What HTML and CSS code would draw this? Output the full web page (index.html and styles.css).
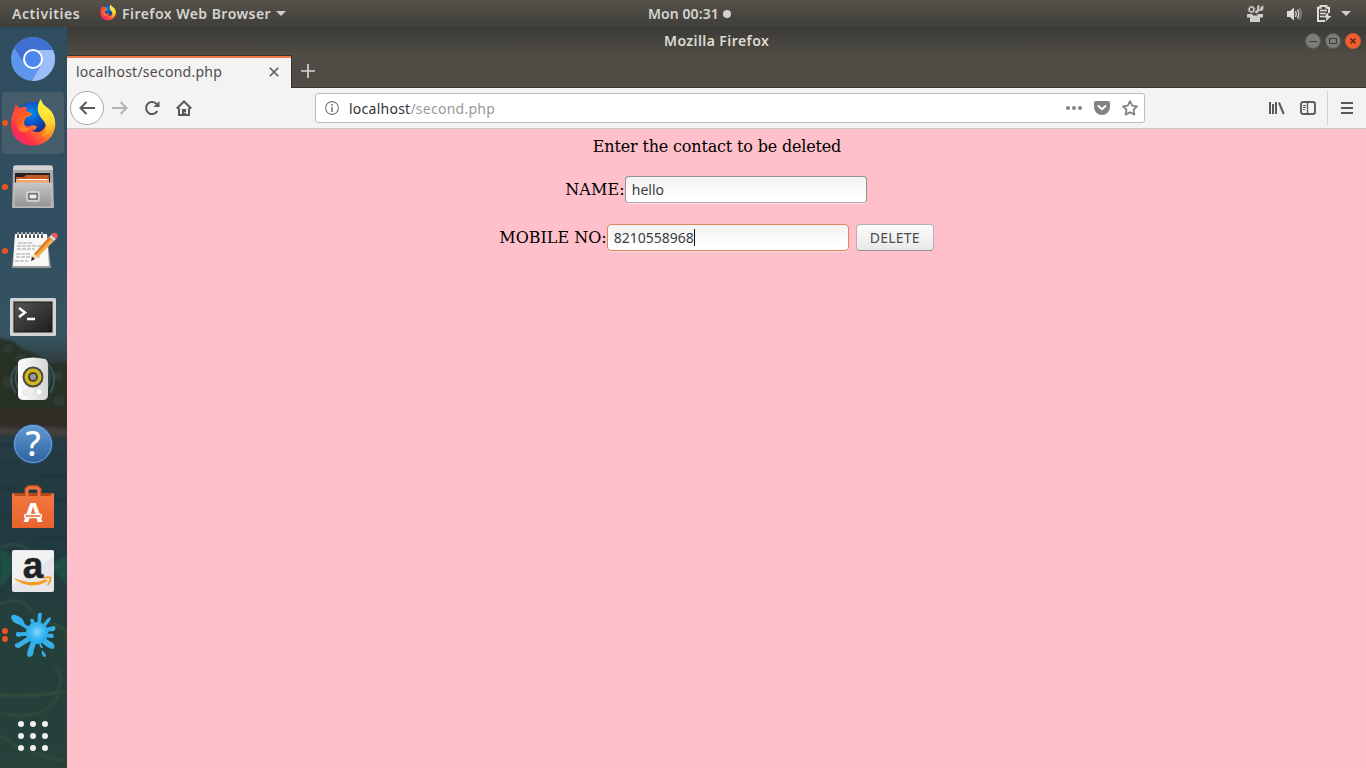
FILE: index.html
```html
<!DOCTYPE html>
<html lang="en">
<head>
<meta charset="utf-8">
<title>Mozilla Firefox</title>
<link rel="stylesheet" href="styles.css">
</head>
<body>
<svg class="defs" width="0" height="0" aria-hidden="true">
  <defs>
    <linearGradient id="ffbody" x1="0" y1="1" x2="1" y2="0"><stop offset="0" stop-color="#f0208a"/><stop offset=".28" stop-color="#ff3048"/><stop offset=".58" stop-color="#ff901c"/><stop offset="1" stop-color="#fff13c"/></linearGradient>
    <linearGradient id="fftail" x1="0" y1="0" x2="0" y2="1"><stop offset="0" stop-color="#fff54a"/><stop offset=".55" stop-color="#ffdc30"/><stop offset="1" stop-color="#ff9820"/></linearGradient>
    <linearGradient id="ffhead" x1="0" y1="0" x2="1" y2="1"><stop offset="0" stop-color="#ff3a45"/><stop offset=".45" stop-color="#ff5a26"/><stop offset="1" stop-color="#ff9c20"/></linearGradient>
    <radialGradient id="ffglobe" cx=".45" cy=".3" r=".6"><stop offset="0" stop-color="#0090ee"/><stop offset=".45" stop-color="#0a58cc"/><stop offset="1" stop-color="#1b2880"/></radialGradient>
    <linearGradient id="metal" x1="0" y1="0" x2="0" y2="1"><stop offset="0" stop-color="#c6c6c6"/><stop offset="1" stop-color="#949494"/></linearGradient>
    <linearGradient id="screen" x1="0" y1="0" x2="1" y2="1"><stop offset="0" stop-color="#555"/><stop offset="1" stop-color="#1c1c1c"/></linearGradient>
    <linearGradient id="speaker" x1="0" y1="0" x2="1" y2="0"><stop offset="0" stop-color="#fff"/><stop offset="1" stop-color="#d4d4d2"/></linearGradient>
    <linearGradient id="help" x1="0" y1="0" x2="0" y2="1"><stop offset="0" stop-color="#629bd4"/><stop offset="1" stop-color="#2c619f"/></linearGradient>
    <linearGradient id="bag" x1="0" y1="0" x2="0" y2="1"><stop offset="0" stop-color="#f27640"/><stop offset="1" stop-color="#e9642d"/></linearGradient>
    <radialGradient id="splat" cx=".5" cy=".45" r=".6"><stop offset="0" stop-color="#80d6fa"/><stop offset=".6" stop-color="#34b4f0"/><stop offset="1" stop-color="#22a6e8"/></radialGradient>
    <linearGradient id="wall" x1="0" y1="0" x2="0" y2="1"><stop offset="0" stop-color="#2f4d5f"/><stop offset=".25" stop-color="#304e60"/><stop offset=".42" stop-color="#36535f"/><stop offset=".45" stop-color="#323f40"/><stop offset=".5" stop-color="#2b3028"/><stop offset=".535" stop-color="#34342f"/><stop offset=".56" stop-color="#253b45"/><stop offset=".72" stop-color="#203a40"/><stop offset=".8" stop-color="#243f3b"/><stop offset="1" stop-color="#25413a"/></linearGradient>
    <filter id="soft" x="-10%" y="-10%" width="120%" height="120%"><feGaussianBlur stdDeviation="1.2"/></filter>
    <symbol id="firefox" viewBox="0 0 46 48">
      <circle cx="23" cy="21" r="18" fill="url(#ffglobe)"/>
      <path fill="url(#ffbody)" d="M1 25C1 19 2 15 4.500 12L5.500 6L10 9.500Q13 8 16 9L15 15L14 24Q15 28 19 27.500Q24 25 27 28Q26 31 22 31.500Q31 37 36 26C38 20 36 15 41 12C47 20 47 32 39 40C32 47 22 48 14 45C5 41 1 34 1 25Z"/>
      <path fill="url(#ffhead)" d="M3 15L5.500 6L9.500 9.500Q13 7 17 8L16 12L22 14.500Q21 17 17 18Q14 20 14 24Q13 29 19 29Q17 35 9 32Z"/>
      <path fill="url(#fftail)" d="M31 0C26 7 27 14 32 20C38 26 37 32 32 37C39 36 43 32 43 27L45 29C46 20 43 13 38 9C35 7 32 5 31 0Z"/>
    </symbol>
  </defs>
</svg>

<header class="topbar">
  <div class="top-left">
    <span class="t-activities">Activities</span>
    <svg class="mini-fox" width="16" height="17"><use href="#firefox"/></svg>
    <span class="t-app">Firefox Web Browser</span>
    <svg class="caret" width="10" height="5"><path d="M0 0H10L5 5Z" fill="#cfcdc9"/></svg>
  </div>
  <div class="clock"><span class="t-clock">Mon 00:31</span><i class="clock-dot"></i></div>
  <div class="tray">
    <svg width="16" height="18" viewBox="0 0 16 18"><g fill="none" stroke="#cfcdc9"><circle cx="4.500" cy="4.500" r="2.300" stroke-width="1.300"/><circle cx="4.500" cy="4.500" r="3.400" stroke-width="1" stroke-dasharray="1.300 1.400"/><path d="M8.500 8L12 4.500" stroke-width="2.400"/><path d="M12 .5C9.500 3 12 6.500 15.300 4.500L15.500 2L13.300 3.500" stroke-width="1.800"/></g><path fill="#cfcdc9" d="M0 9H5L6 10.500H10L11 9H16V12.500H13V17H3V12.500H0Z"/></svg>
    <svg class="vol" width="16" height="16" viewBox="0 0 16 16"><path fill="#dedcd8" d="M0 5H3L7 1.500V14.500L3 11H0Z"/><g fill="none" stroke="#cfcdc9" stroke-width="1.500"><path d="M8.500 5Q10 8 8.500 11"/><path d="M10.500 3.500Q13 8 10.500 12.500"/><path stroke="#85827b" d="M12.500 2Q16 8 12.500 14"/></g></svg>
    <svg class="bat" width="15" height="17" viewBox="0 0 15 17"><path d="M8 16H1V2.800H3.500V1H9.500V2.800H12V8" fill="none" stroke="#dedcd8" stroke-width="2"/><path d="M3 5.500H10M3 8.500H9M3 11.500H7" stroke="#dedcd8" stroke-width="1.300"/><path d="M11 7.500L6.500 12.500H9.500L8.500 16.500L14.500 11H11.500Z" fill="#dedcd8"/></svg>
    <svg class="caret" width="10" height="5"><path d="M0 0H10L5 5Z" fill="#cfcdc9"/></svg>
  </div>
</header>

<div class="desktop">
  <nav class="dock">
    <svg class="wallpaper" width="67" height="741" viewBox="0 27 67 741">
      <rect y="27" width="67" height="741" fill="url(#wall)"/>
      <g filter="url(#soft)">
      <path fill="#253026" d="M-4 337L12 341L23 349L35 354L50 363L71 362V426H-4Z"/>
      <g fill="#303a30"><circle cx="8" cy="349" r="5"/><circle cx="21" cy="359" r="6"/><circle cx="42" cy="366" r="5"/><circle cx="57" cy="376" r="6"/><circle cx="8" cy="382" r="6"/><circle cx="59" cy="401" r="6"/></g>
      <path fill="#302e27" d="M-4 408H71V427H-4Z"/><path fill="#45413a" d="M-4 427L20 430L45 427L71 430V437L-4 434Z"/>
      <g fill="none" stroke="#1a3037" stroke-width="2"><path d="M0 445H24M43 454H67M0 463H20M35 476H67M0 488H17M48 500H67M0 515H13M35 538H67"/></g>
      <g fill="none" stroke="#36543f" stroke-width="2" opacity=".8"><path d="M0 548Q20 538 31 554T67 565"/><path d="M0 604Q20 595 30 609T55 625T67 652"/><path d="M0 694Q29 699 67 691"/><path d="M0 735Q23 754 67 761"/><path d="M0 713Q44 723 59 695"/><path d="M55 665Q68 684 53 694L0 696"/></g>
      <path fill="#1d5a45" opacity=".6" d="M0 550Q20 555 13 570T0 587ZM48 565L67 556V585Z"/>
      </g>
    </svg>
    <div class="slot"><svg width="44" height="44" viewBox="0 0 44 44"><circle cx="22" cy="22" r="22" fill="#5e95ed"/><path d="M3 11A22 22 0 0 1 42 13H22L12 24Z" fill="#3f6fd3"/><path d="M42 13A22 22 0 0 1 21 44L31 26L27 13Z" fill="#9bbdf8"/><circle cx="22" cy="22" r="9" fill="#4b88ee" stroke="#fff" stroke-width="2"/></svg></div>
    <div class="slot active"><i class="run"></i><svg width="46" height="48"><use href="#firefox"/></svg></div>
    <div class="slot"><i class="run"></i><svg width="44" height="44" viewBox="0 0 44 44"><path d="M2 3Q2 0 5 0H39Q42 0 42 3L43 43H1Z" fill="#a9a9a9"/><path d="M3 1H41L42 5H2Z" fill="#d2d2d2"/><path d="M4 8H39V20H4Z" fill="#222"/><path d="M5 12H13L15 10H38V19H5Z" fill="#c35a24"/><path d="M5 14H38V20H5Z" fill="#f1a667"/><path d="M7 14.500H36" stroke="#fff"/><path d="M3 18H41V42H3Z" fill="url(#metal)" stroke="#c7c7c7"/><rect x="16" y="27" width="12" height="9" rx="1.500" fill="#999" stroke="#ddd" stroke-width="1.500"/><rect x="18" y="29" width="8" height="5" fill="#eee" stroke="#555"/></svg></div>
    <div class="slot"><i class="run"></i><svg class="notes" width="48" height="40" viewBox="0 0 48 40"><path d="M5 4H37L41 37H2Z" fill="#999"/><path d="M5 3H37L39 35H3Z" fill="#f8f8f6"/><g stroke="#a2a2a2" stroke-dasharray="4 1"><path d="M8 12H22M7 15H31M7 18H25M6 23H20M6 26H30M5 30H18"/></g><path d="M8 2V7M12 2V7M16 2V7M20 2V7M24 2V7M28 2V7M32 2V7" stroke="#555" stroke-width="2"/><path d="M8 1V4M12 1V4M16 1V4M20 1V4M24 1V4M28 1V4M32 1V4" stroke="#fff"/><path d="M21 30L24 23L39 6L44 10L28 26Z" fill="#f2ad55"/><path d="M24 23L39 6L41 8L26 24Z" fill="#db7b22"/><path d="M21 30L24 23L28 26Z" fill="#f5d5a3"/><path d="M21 30L22 26L25 28Z" fill="#222"/><path d="M39 6L42 3L47 7L44 10Z" fill="#d8d8d8"/><path d="M41 4L43 2Q46 1 48 4Q48 6 46 8Z" fill="#e95965"/></svg></div>
    <div class="slot terminal"><svg width="46" height="38" viewBox="0 0 46 38"><rect width="46" height="38" rx="1.500" fill="#d3d3d5"/><rect x="4" y="4" width="38" height="30" fill="url(#screen)" stroke="#161616"/><path d="M9 10L15 14.500L9 19M17 21H25" fill="none" stroke="#fff" stroke-width="2.400"/></svg></div>
    <div class="slot"><svg width="46" height="46" viewBox="0 0 46 46"><g fill="none" stroke="#507288" stroke-width="2" opacity=".5"><path d="M7 10Q-4 22 6 37M10 8Q1 23 10 35M38 8Q49 22 40 37M36 8Q43 23 36 35"/></g><path d="M12 3Q23 0 35 3Q38 4 38 9V39Q38 44 33 44H14Q8 44 8 39V8Q8 4 12 3Z" fill="url(#speaker)"/><circle cx="23" cy="21" r="10.500" fill="#49494a"/><circle cx="23" cy="21" r="8.500" fill="#d4b61d"/><circle cx="23" cy="21" r="5" fill="#4b4738"/><circle cx="23" cy="21" r="3" fill="#999"/><circle cx="29" cy="36" r="3.500" fill="#fff" stroke="#ccc"/><circle cx="15.500" cy="36.500" r="2.200" fill="none" stroke="#ddd"/></svg></div>
    <div class="slot help"><svg width="42" height="42" viewBox="0 0 42 42"><circle cx="21" cy="21" r="19.500" fill="url(#help)" stroke="#234c7a"/><circle cx="21" cy="21" r="18.500" fill="none" stroke="#73a2d3"/><text x="21" y="33" text-anchor="middle" class="help-mark">?</text></svg></div>
    <div class="slot"><svg width="44" height="44" viewBox="0 0 44 44"><path d="M15 15V4L18 1.500H26L29 4V15" fill="none" stroke="#c94b19" stroke-width="3"/><path d="M1 8H43V43H1Z" fill="url(#bag)"/><path d="M1 8L5 11H39L43 8" fill="#b8481c"/><path d="M16 15V5L18 3H26L28 5V15" fill="none" stroke="#ee7442" stroke-width="3"/><text x="22" y="37" text-anchor="middle" class="store-mark">A</text><rect x="13.500" y="29.500" width="17" height="3" rx="1.500" fill="#e9642d" stroke="#fff" stroke-width="1.500"/></svg></div>
    <div class="slot"><svg width="42" height="42" viewBox="0 0 42 42"><rect width="42" height="42" rx="2" fill="#e6e6e8"/><path d="M0 1H42V6L0 36Z" fill="#f8f8f8" opacity=".6"/><text x="21" y="28" text-anchor="middle" class="amazon-mark">a</text><path d="M3 29Q19 40 35 31L34.500 30Q19 36 3 29Z" fill="#f79b19" stroke="#f79b19"/><path d="M31.500 28.500Q36 26.500 38.500 27.500Q39 31 35.500 35" fill="none" stroke="#f79b19" stroke-width="1.800"/></svg></div>
    <div class="slot"><i class="run run-a"></i><i class="run run-b"></i><svg width="46" height="48" viewBox="0 0 46 48"><g fill="#36b0e8"><path d="M1 6Q2 2 8 5Q14 8 14 12Q17 16 23 16L20 23Q16 17 10 14Q2 12 1 6Z"/><path d="M20 9Q22 6 24 9L26 16L23 18Z"/><path d="M28 3Q30 0 32 3L30 17H27Z"/><path d="M40 6Q42 8 39 11L34 18L31 16L37 8Z"/><path d="M44 15Q47 17 44 20L35 21V17Z"/><path d="M43 23Q45 26 42 27L34 26V22Z"/><path d="M33 25Q37 29 43 32Q46 36 43 38Q38 38 29 29Z"/><path d="M22 29L27 31Q24 36 23 44Q19 48 17 44Q17 39 22 29Z"/><path d="M20 24L22 29Q15 33 9 37Q4 37 5 33Q10 31 20 24Z"/><path d="M20 20V25Q13 24 8 26Q4 24 7 21Q13 22 20 20Z"/><path d="M30 31L33 37H31L28 31Z"/><path d="M32 39Q31 44 34 46Q39 46 32 39Z"/></g><circle cx="27" cy="22" r="11" fill="url(#splat)"/></svg></div>
    <div class="slot apps"><svg width="30" height="30" viewBox="0 0 30 30"><g fill="#f0f0f0"><circle cx="3" cy="3" r="3"/><circle cx="15" cy="3" r="3"/><circle cx="27" cy="3" r="3"/><circle cx="3" cy="15" r="3"/><circle cx="15" cy="15" r="3"/><circle cx="27" cy="15" r="3"/><circle cx="3" cy="27" r="3"/><circle cx="15" cy="27" r="3"/><circle cx="27" cy="27" r="3"/></g></svg></div>
  </nav>

  <main class="window">
    <div class="titlebar">
      <span class="t-title">Mozilla Firefox</span>
      <div class="controls">
        <svg width="16" height="16"><circle cx="8" cy="8" r="7.500" fill="#7e7c76" stroke="#5d5b55"/><path d="M4 8.500H12" stroke="#3c3b37"/></svg>
        <svg width="16" height="16"><circle cx="8" cy="8" r="7.500" fill="#7e7c76" stroke="#5d5b55"/><rect x="4.500" y="5.500" width="7" height="5" fill="none" stroke="#3c3b37"/></svg>
        <svg width="16" height="16"><circle cx="8" cy="8" r="7.500" fill="#f05d2e" stroke="#d95831"/><path d="M5.500 5.500L10.500 10.500M10.500 5.500L5.500 10.500" stroke="#5b2514" stroke-width="1.500"/></svg>
      </div>
    </div>
    <div class="tabs">
      <div class="tab"><span class="t-tab">localhost/second.php</span><svg width="10" height="10"><path d="M.8 .8L9.200 9.200M9.200 .8L.8 9.200" stroke="#5c5b5a" stroke-width="1.600"/></svg></div>
      <svg class="plus" width="14" height="14"><path d="M7 0V14M0 7H14" stroke="#d5d3cf" stroke-width="1.700"/></svg>
    </div>
    <div class="toolbar">
      <div class="back"><svg width="16" height="14"><path d="M7.500 1L1.500 7L7.500 13M1.500 7H16" fill="none" stroke="#5b5a59" stroke-width="2"/></svg></div>
      <svg class="fwd" width="16" height="14"><path d="M8.500 1L14.500 7L8.500 13M14.500 7H0" fill="none" stroke="#b5b4b3" stroke-width="2"/></svg>
      <svg class="reload" width="16" height="16"><path d="M13.300 11A6 6 0 1 1 12 3.500L14 6" fill="none" stroke="#5b5a59" stroke-width="2"/><path d="M15.500 1V7H9.500Z" fill="#5b5a59"/></svg>
      <svg class="home" width="16" height="16"><path d="M.8 8.500L8 1.500L15.200 8.500" fill="none" stroke="#5b5a59" stroke-width="2"/><path d="M3 8V15H13V8M8 11V15" fill="none" stroke="#5b5a59" stroke-width="2"/><path d="M6 9H10V15H6Z" fill="#5b5a59"/><path d="M8.300 12.500H9.500" stroke="#fff"/></svg>
      <div class="url">
        <svg width="14" height="14"><circle cx="7" cy="7" r="6.400" fill="none" stroke="#777" stroke-width="1.100"/><path d="M7 6V11M7 3V4.800" stroke="#777" stroke-width="1.600"/></svg>
        <span class="t-url">localhost<span class="path">/second.php</span></span>
        <div class="url-icons">
          <svg width="16" height="16"><g fill="#828282"><circle cx="2" cy="8" r="2"/><circle cx="8" cy="8" r="2"/><circle cx="14" cy="8" r="2"/></g></svg>
          <svg width="16" height="16"><path d="M2 1H14Q16 1 16 3V7A8 8 0 0 1 0 7V3Q0 1 2 1Z" fill="#828282"/><path d="M4.500 6L8 9.200L11.500 6" fill="none" stroke="#fff" stroke-width="2" stroke-linecap="round"/></svg>
          <svg width="16" height="16"><path d="M8 1.200L10.200 5.600L15 6.300L11.500 9.700L12.400 14.600L8 12.200L3.600 14.600L4.500 9.700L1 6.300L5.800 5.600Z" fill="none" stroke="#828282" stroke-width="1.800" stroke-linejoin="round"/></svg>
        </div>
      </div>
      <div class="tools">
        <svg width="16" height="14"><path d="M1 1V13M4 3V13M7 1V13" stroke="#5b5a59" stroke-width="2"/><path d="M10 1.500L14.700 13" stroke="#5b5a59" stroke-width="2"/></svg>
        <svg width="16" height="14"><rect x="1" y="1" width="14" height="12" rx="2" fill="none" stroke="#5b5a59" stroke-width="1.900"/><path d="M7.500 1V13" stroke="#5b5a59" stroke-width="1.300"/><path d="M3 4.500H6M3 6.500H6M3 8.500H5" stroke="#5b5a59"/></svg>
      </div>
      <div class="menu"><svg width="12" height="12"><path d="M0 1H12M0 6H12M0 11H12" stroke="#5b5a59" stroke-width="2"/></svg></div>
    </div>
    <form class="page">
      <div class="heading">Enter the contact to be deleted</div>
      <div class="row name-row"><label>NAME:</label><div class="field"><span class="t-hello">hello</span></div></div>
      <div class="row"><label>MOBILE NO:</label><div class="field focus"><span class="t-num">8210558968</span><i class="cursor"></i></div><button type="button"><span class="t-del">DELETE</span></button></div>
    </form>
  </main>
</div>
</body>
</html>
```
FILE: styles.css
```css
* { box-sizing: border-box; }
body { margin: 0; width: 1366px; height: 768px; overflow: hidden; font: 14px "Noto Sans", sans-serif; display: flex; flex-direction: column; }
svg { display: block; flex: none; overflow: visible; }
span, label, .heading { white-space: nowrap; }
.defs { position: absolute; }
.topbar { height: 27px; flex: none; display: grid; grid-template-columns: 648px 1fr auto; align-items: center; background: linear-gradient(#55524a, #3f3e39); color: #d6d4cf; font-weight: 600; }
.top-left { display: flex; align-items: center; padding-left: 12px; }
.t-activities { width: 88px; letter-spacing: .58px; }
.mini-fox { margin: -2px 6px 0 0; }
.t-app { width: 149px; letter-spacing: .46px; }
.top-left .caret { margin-left: 5px; }
.clock { display: flex; align-items: center; }
.t-clock { width: 75px; letter-spacing: .08px; }
.clock-dot { width: 8px; height: 8px; border-radius: 50%; background: #d3d1cd; }
.tray { display: flex; align-items: center; padding-right: 15px; }
.tray svg { margin-right: -1px; }
.tray .vol { margin-left: 25px; }
.tray .bat { margin-left: 15px; }
.tray .caret { margin: 0 0 0 10px; }
.desktop { display: flex; flex: 1; min-height: 0; }
.dock { width: 67px; position: relative; padding: 1px 3px 1px 2px; display: flex; flex-direction: column; gap: 2px; overflow: hidden; }
.wallpaper { position: absolute; left: 0; top: 0; }
.slot { position: relative; width: 62px; height: 62px; flex: none; display: flex; align-items: center; justify-content: center; border-radius: 4px; }
.active { background: #455c6a; }
.apps { margin-top: auto; }
.terminal { padding-top: 3px; }
.notes { margin-left: 1px; }
.help { padding-top: 2px; }
.run { position: absolute; left: 0; top: 28px; width: 6px; height: 6px; border-radius: 50%; background: #e95420; }
.run-a { top: 24px; }
.run-b { top: 32px; }
.help-mark { font: 500 34px "Noto Sans", sans-serif; fill: #fff; }
.store-mark { font: bold 27px "Noto Sans", sans-serif; fill: #fff; }
.amazon-mark { font: bold 37px/1 "Liberation Sans", sans-serif; fill: #222; stroke: #222; stroke-width: .5px; }
.window { flex: 1; display: flex; flex-direction: column; background: pink; }
.titlebar { height: 28px; display: grid; grid-template-columns: 597px 1fr auto; align-items: center; padding-right: 5px; background: linear-gradient(#3b3a36, #4f4c45); color: #dfdbd2; font-weight: 600; }
.titlebar::before { content: ""; }
.t-title { letter-spacing: .42px; padding-bottom: 2px; }
.controls { display: flex; gap: 4px; }
.tabs { height: 33px; display: flex; background: #4f4c45; border-bottom: 1px solid #373531; }
.tab { width: 225px; height: 33px; display: flex; align-items: center; justify-content: space-between; padding: 0 12px 0 9px; background: #f4f3f2; border-top: 1px solid #373531; border-right: 1px solid #373531; box-shadow: inset 0 2px #f37746; color: #4c4c4c; }
.t-tab, .t-url { letter-spacing: .25px; }
.t-tab { padding-bottom: 2px; }
.plus { margin: 9px 0 0 9px; }
.toolbar { height: 41px; display: flex; align-items: center; background: #f4f3f2; border-bottom: 1px solid #c9c7c5; padding-left: 3px; }
.back { width: 34px; height: 34px; border: 1px solid #aaa; border-radius: 50%; background: #fff; display: flex; align-items: center; justify-content: center; }
.fwd { margin-left: 8px; }
.reload { margin-left: 16px; }
.home { margin-left: 16px; }
.url { width: 830px; height: 30px; margin-left: 123px; border: 1px solid #bebbb8; border-radius: 3px; background: #fff; display: flex; align-items: center; padding: 0 6px 0 9px; color: #333; }
.t-url { margin-left: 10px; }
.path { color: #999; }
.url-icons { margin-left: auto; display: flex; gap: 12px; }
.tools { margin-left: 124px; display: flex; gap: 15px; }
.menu { height: 34px; margin-left: 11px; padding-left: 13px; border-left: 1px solid #d4d2d0; display: flex; align-items: center; }
.page { flex: 1; padding-top: 8px; display: flex; flex-direction: column; align-items: center; font: 16px "DejaVu Serif", serif; color: #000; }
.heading { height: 20px; line-height: 20px; letter-spacing: -.17px; padding-left: 1px; }
.row { display: flex; align-items: center; height: 27px; margin-top: 19px; }
.row + .row { margin-top: 21px; }
.name-row { padding-right: 1px; }
.name-row label { letter-spacing: .1px; }
.field { width: 242px; height: 27px; border: 1px solid #929292; border-bottom-color: #aaa; border-radius: 4px; background: linear-gradient(#f2f2f2, #fff 80%); box-shadow: 0 1px #ffdfe4; font: 14px "Noto Sans", sans-serif; color: #3c3c3c; padding-left: 6px; display: flex; align-items: center; }
.focus { border-color: #e18561; }
.cursor { width: 1px; height: 17px; background: #111; }
button { width: 78px; height: 27px; margin-left: 7px; padding: 0; border: 1px solid #b5b1ae; border-bottom-color: #96928f; border-radius: 4px; background: linear-gradient(#fcfcfc, #eae8e7); font: 14px "Noto Sans", sans-serif; color: #4c4c4c; letter-spacing: .2px; }
```
